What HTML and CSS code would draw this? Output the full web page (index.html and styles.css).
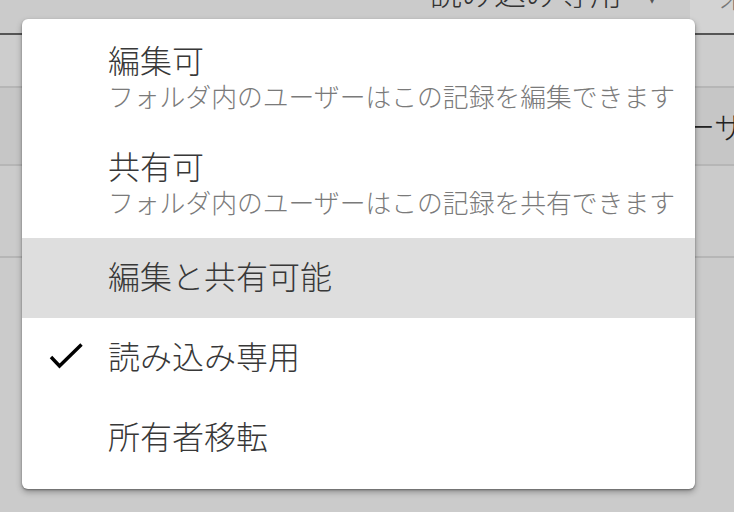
FILE: index.html
```html
<!DOCTYPE html>
<html lang="ja">
  <head>
    <meta charset="UTF-8" />
    <meta name="viewport" content="width=device-width, initial-scale=1.0" />
    <title>共有設定</title>
    <link rel="stylesheet" href="styles.css">
  </head>
  <body>
    <div id="page">
      <div class="row header">
        <div class="cell main">
          <span class="header-value">読み込み専用</span>
          <span class="caret">▾</span>
        </div>
        <div class="cell side"><span class="side-text">未</span></div>
      </div>
      <div class="row r1">
        <div class="cell main"></div>
        <div class="cell side"></div>
      </div>
      <div class="row r2">
        <div class="cell main"></div>
        <div class="cell side"><span class="side-text">ユーザー</span></div>
      </div>
      <div class="row r3">
        <div class="cell main"></div>
        <div class="cell side"></div>
      </div>
      <div class="row r4">
        <div class="cell main"></div>
        <div class="cell side"></div>
      </div>
    </div>

    <div id="menu">
      <div class="item two-line">
        <span class="check"></span>
        <div class="labels">
          <div class="title">編集可</div>
          <div class="subtitle">フォルダ内のユーザーはこの記録を編集できます</div>
        </div>
      </div>
      <div class="item two-line">
        <span class="check"></span>
        <div class="labels">
          <div class="title">共有可</div>
          <div class="subtitle">フォルダ内のユーザーはこの記録を共有できます</div>
        </div>
      </div>
      <div class="item active">
        <span class="check"></span>
        <div class="labels">
          <div class="title">編集と共有可能</div>
        </div>
      </div>
      <div class="item selected">
        <span class="check">
          <svg width="36" height="30" viewBox="0 0 36 30">
            <path d="M2 14 L10.5 23 L32.5 1.5" fill="none" stroke="#000" stroke-width="3.4" />
          </svg>
        </span>
        <div class="labels">
          <div class="title">読み込み専用</div>
        </div>
      </div>
      <div class="item">
        <span class="check"></span>
        <div class="labels">
          <div class="title">所有者移転</div>
        </div>
      </div>
    </div>
  </body>
</html>
```

FILE: styles.css
```css
* {
  margin: 0;
  padding: 0;
  box-sizing: border-box;
}

body {
  font-family: "Noto Sans CJK JP", "Noto Sans", sans-serif;
  font-weight: 300;
  background-color: #cbcbcb;
  width: 734px;
  height: 512px;
  overflow: hidden;
}

/* dimmed page behind the menu */
#page {
  display: flex;
  flex-direction: column;
}

.row {
  display: flex;
  border-bottom: 2px solid #b6b6b6;
}

.cell.main {
  width: 690px;
}

.cell.side {
  flex: 1;
  overflow: hidden;
  white-space: nowrap;
}

.header {
  height: 35px;
  border-bottom: 2px solid #555555;
  overflow: hidden;
  align-items: flex-start;
}

.header .main {
  display: flex;
  align-items: flex-start;
  padding-left: 430px;
  color: #333333;
  font-size: 32px;
  line-height: 40px;
  margin-top: -29px;
}

.caret {
  font-size: 16px;
  color: #555555;
  margin-left: 26px;
  line-height: 40px;
  margin-top: 6px;
}

.header .side {
  align-self: stretch;
  background-color: #d3d3d3;
  padding-left: 30px;
  font-size: 28px;
  line-height: 40px;
  color: #777777;
}

.side-text {
  display: block;
}

.header .side-text {
  margin-top: -24px;
}

.r1 {
  height: 53px;
  background-color: #cdcdcd;
}

.r2 {
  height: 78px;
  background-color: #c6c6c6;
}

.r2 .side {
  font-size: 30px;
  line-height: 74px;
  color: #222222;
  margin-left: -35px;
}

.r3 {
  height: 92px;
}

.r4 {
  height: 260px;
  border-bottom: none;
}

/* popup menu */
#menu {
  position: absolute;
  left: 22px;
  top: 19px;
  width: 673px;
  height: 470px;
  background-color: #ffffff;
  border-radius: 6px;
  padding: 7px 0 10px;
  box-shadow: 0 1px 2px rgba(0, 0, 0, 0.35), 0 3px 6px rgba(0, 0, 0, 0.3);
}

.item {
  display: flex;
  align-items: center;
  height: 80px;
  padding-bottom: 6px;
}

.item.two-line {
  height: 106px;
  align-items: flex-start;
  padding: 13px 0 0;
}

.item.active {
  background-color: #dedede;
}

.check {
  width: 86px;
  display: flex;
  justify-content: flex-end;
  padding-top: 6px;
}

.check svg {
  display: block;
  margin-right: 23px;
}

.title {
  font-size: 32px;
  line-height: 40px;
  color: #383838;
}

.subtitle {
  font-size: 25.8px;
  line-height: 32px;
  margin-top: 1px;
  color: #7a7a7a;
}
```
